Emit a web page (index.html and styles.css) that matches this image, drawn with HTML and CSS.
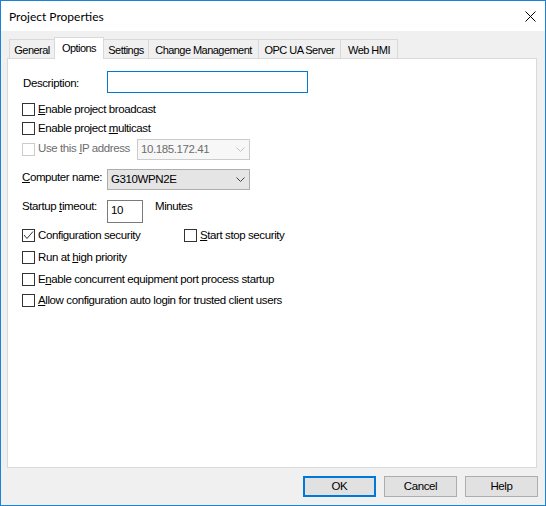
FILE: index.html
```html
<!DOCTYPE html>
<html>
<head>
<meta charset="utf-8">
<title>Project Properties</title>
<link rel="stylesheet" href="styles.css">
</head>
<body>
<div class="window">
  <div class="titlebar">
    <span class="title">Project Properties</span>
    <svg class="close" width="11" height="11" viewBox="0 0 11 11"><path d="M0.5 0.5L10.5 10.5M10.5 0.5L0.5 10.5" stroke="#000" stroke-width="1" fill="none"/></svg>
  </div>
  <div class="client">
    <div class="tabs">
      <div class="tab t-general">General</div>
      <div class="tab t-options active">Options</div>
      <div class="tab t-settings">Settings</div>
      <div class="tab t-change">Change Management</div>
      <div class="tab t-opc">OPC UA Server</div>
      <div class="tab t-web">Web HMI</div>
    </div>
    <div class="panel">
      <div class="row r-desc">
        <span class="lbl lbl-desc">Description:</span>
        <div class="textbox focus"></div>
      </div>
      <div class="row row-cb r-cb1"><span class="cb"></span><span class="cb-text"><u>E</u>nable project broadcast</span></div>
      <div class="row row-cb r-cb2"><span class="cb"></span><span class="cb-text">Enable project <u>m</u>ulticast</span></div>
      <div class="row r-ip">
        <span class="cb disabled cb-ip"></span><span class="cb-text disabled ip-label">Use this <u>I</u>P address</span>
        <div class="combo disabled ip-combo"><span>10.185.172.41</span><svg class="chev" width="9" height="5" viewBox="0 0 9 5"><path d="M0.5 0.5L4.5 4.5L8.5 0.5" stroke="#c4c4c4" stroke-width="1" fill="none"/></svg></div>
      </div>
      <div class="row r-comp">
        <span class="lbl lbl-comp"><u>C</u>omputer name:</span>
        <div class="combo comp-combo"><span>G310WPN2E</span><svg class="chev" width="9" height="5" viewBox="0 0 9 5"><path d="M0.5 0.5L4.5 4.5L8.5 0.5" stroke="#444" stroke-width="1" fill="none"/></svg></div>
      </div>
      <div class="row r-start">
        <span class="lbl">Startup <u>t</u>imeout:</span>
        <div class="numbox">10</div>
        <span class="minutes">Minutes</span>
      </div>
      <div class="row row-cb r-conf">
        <div class="cbgroup wide"><span class="cb"><svg width="11" height="11" viewBox="0 0 11 11"><path d="M1 5L4 8.5L10 1.5" stroke="#333" stroke-width="1" fill="none"/></svg></span><span class="cb-text">Confi<u>g</u>uration security</span></div>
        <div class="cbgroup"><span class="cb"></span><span class="cb-text"><u>S</u>tart stop security</span></div>
      </div>
      <div class="row row-cb r-run"><span class="cb"></span><span class="cb-text">Run at <u>h</u>igh priority</span></div>
      <div class="row row-cb r-conc"><span class="cb"></span><span class="cb-text">E<u>n</u>able concurrent equipment port process startup</span></div>
      <div class="row row-cb r-allow"><span class="cb"></span><span class="cb-text"><u>A</u>llow configuration auto login for trusted client users</span></div>
    </div>
    <div class="buttons">
      <div class="btn default">OK</div>
      <div class="btn">Cancel</div>
      <div class="btn">Help</div>
    </div>
  </div>
</div>
</body>
</html>
```

FILE: styles.css
```css
* { box-sizing: border-box; }
html, body { margin: 0; padding: 0; }
body {
  width: 546px;
  height: 506px;
  overflow: hidden;
  font-family: "Liberation Sans", Arial, sans-serif;
  font-size: 11.5px;
  line-height: 13px;
  letter-spacing: -0.4px;
  color: #000;
  background: #fff;
}
.window {
  width: 546px;
  height: 506px;
  border: 1px solid #1883d7;
  display: flex;
  flex-direction: column;
  background: #f0f0f0;
}
.titlebar {
  height: 30px;
  flex: none;
  background: #fff;
  display: flex;
  align-items: center;
  justify-content: space-between;
  padding: 0 9px 0 8px;
}
.title {
  font-family: Lato, "Noto Sans", sans-serif;
  font-size: 12px;
  letter-spacing: 0;
}
.close { display: block; }
.client {
  flex: 1;
  display: flex;
  flex-direction: column;
  padding: 6px 8px 0 6px;
}
.tabs {
  display: flex;
  align-items: flex-end;
  height: 21px;
  padding-left: 2px;
  position: relative;
  z-index: 1;
}
.tab {
  height: 19px;
  border: 1px solid #d9d9d9;
  border-bottom: none;
  background: #f0f0f0;
  margin-left: -1px;
  text-align: center;
  padding-top: 4px;
  font-size: 11px;
  letter-spacing: -0.55px;
  white-space: nowrap;
}
.tab:first-child { margin-left: 0; }
.tab.active {
  height: 22px;
  background: #fff;
  margin-bottom: -1px;
  position: relative;
  z-index: 2;
}
.t-general { width: 46px; }
.t-options { width: 50px; }
.t-settings { width: 46px; }
.t-change { width: 111px; }
.t-opc { width: 83px; }
.t-web { width: 58px; }
.panel {
  width: 530px;
  height: 410px;
  flex: none;
  background: #fff;
  border: 1px solid #d9d9d9;
  display: flex;
  flex-direction: column;
  padding-left: 14px;
}
.row { display: flex; align-items: flex-start; flex: none; }
.row-cb { height: 13px; align-items: center; }
.r-desc { margin-top: 12px; height: 22px; }
.r-cb1 { margin-top: 10px; }
.r-cb2 { margin-top: 6px; }
.r-ip { margin-top: 4px; height: 21px; }
.r-comp { margin-top: 9px; height: 21px; }
.r-start { margin-top: 10px; height: 23px; }
.r-conf { margin-top: 6px; }
.r-run { margin-top: 9px; }
.r-conc { margin-top: 9px; }
.r-allow { margin-top: 8px; }
.lbl { width: 85px; white-space: nowrap; flex: none; }
.lbl-desc { width: 84px; margin-left: 1px; margin-top: 6px; }
.lbl-comp { margin-top: 2px; }
.cb {
  width: 13px;
  height: 13px;
  flex: none;
  border: 1px solid #333;
  background: #fff;
  display: block;
}
.cb svg { display: block; }
.cb.disabled { border-color: #cccccc; }
.cb-ip { margin-top: 4px; }
.cb-text { margin-left: 3px; white-space: nowrap; }
.cb-text.disabled { color: #6d6d6d; }
.ip-label { width: 99px; margin-top: 3px; flex: none; }
.cbgroup { display: flex; align-items: center; }
.cbgroup.wide { width: 162px; }
.textbox {
  width: 201px;
  height: 22px;
  background: #fff;
  border: 1px solid #7a7a7a;
}
.textbox.focus { border-color: #0078d7; }
.numbox {
  width: 36px;
  height: 23px;
  border: 1px solid #7a7a7a;
  background: #fff;
  padding: 3px 0 0 3px;
}
.minutes { margin-left: 12px; }
.combo {
  height: 21px;
  border: 1px solid #adadad;
  background: #e5e5e5;
  display: flex;
  align-items: center;
  justify-content: space-between;
  padding: 0 4px 0 3px;
}
.combo.disabled {
  border-color: #cccccc;
  background: #f7f7f7;
  color: #6d6d6d;
}
.chev { display: block; }
.ip-combo { width: 113px; }
.comp-combo { width: 143px; }
.buttons {
  display: flex;
  justify-content: flex-end;
  gap: 8px;
  margin-top: 8px;
  margin-right: -1px;
}
.btn {
  width: 73px;
  height: 21px;
  background: #e1e1e1;
  border: 1px solid #adadad;
  display: flex;
  align-items: center;
  justify-content: center;
}
.btn.default { border: 2px solid #0078d7; }
```
